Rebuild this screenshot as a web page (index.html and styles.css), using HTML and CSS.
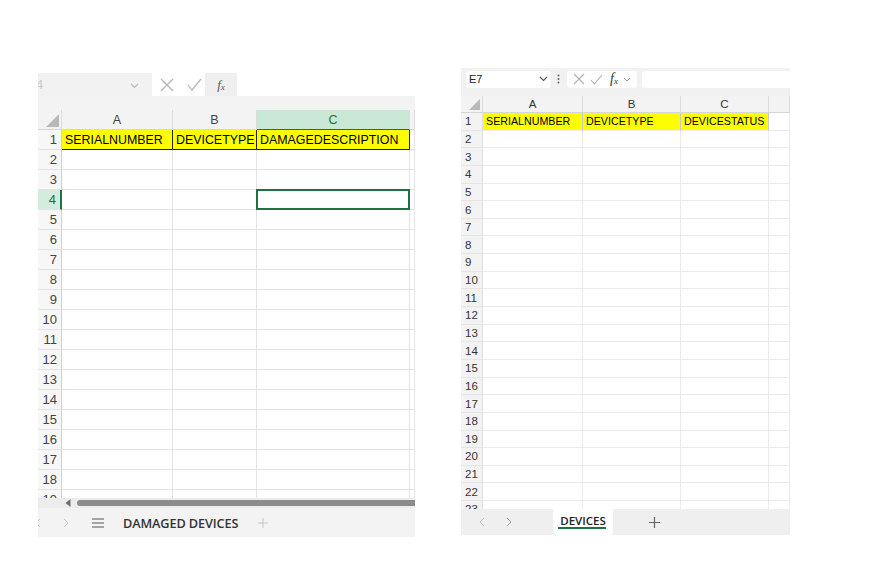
FILE: index.html
```html
<!DOCTYPE html>
<html>
<head>
<meta charset="utf-8">
<link rel="stylesheet" href="styles.css">
</head>
<body>
<div class="page">
  <section class="sheet-l">
    <div class="fbar-l">
      <div class="namebox-l"><span class="nb-text-l">4</span>
        <svg class="chev-l" width="9" height="6" viewBox="0 0 9 6"><path d="M1 1 L4.5 4.5 L8 1" fill="none" stroke="#b8b8b8" stroke-width="1.1"/></svg>
      </div>
      <div class="fbicons-l">
        <svg width="14" height="14" viewBox="0 0 14 14"><path d="M1 1 L13 13 M13 1 L1 13" stroke="#b4b4b4" stroke-width="1.2" fill="none"/></svg>
        <svg width="15" height="13" viewBox="0 0 15 13"><path d="M1 7 L5 12 L14 1" stroke="#b4b4b4" stroke-width="1.2" fill="none"/></svg>
      </div>
      <div class="fx-l"><span class="fx">f<sub>x</sub></span></div>
      <div class="finput-l"></div>
    </div>
    <div class="band-l"></div>
    <div class="grid-l">
      <div class="ch corner"><span class="tri"></span></div><div class="ch">A</div><div class="ch">B</div><div class="ch sel">C</div><div class="ch"></div>
      <div class="rh">1</div><div class="c y">SERIALNUMBER</div><div class="c y">DEVICETYPE</div><div class="c y yl">DAMAGEDESCRIPTION</div><div class="c"></div>
      <div class="rh">2</div><div class="c"></div><div class="c"></div><div class="c"></div><div class="c"></div>
      <div class="rh">3</div><div class="c"></div><div class="c"></div><div class="c"></div><div class="c"></div>
      <div class="rh rsel">4</div><div class="c"></div><div class="c"></div><div class="c active"></div><div class="c"></div>
      <div class="rh">5</div><div class="c"></div><div class="c"></div><div class="c"></div><div class="c"></div>
      <div class="rh">6</div><div class="c"></div><div class="c"></div><div class="c"></div><div class="c"></div>
      <div class="rh">7</div><div class="c"></div><div class="c"></div><div class="c"></div><div class="c"></div>
      <div class="rh">8</div><div class="c"></div><div class="c"></div><div class="c"></div><div class="c"></div>
      <div class="rh">9</div><div class="c"></div><div class="c"></div><div class="c"></div><div class="c"></div>
      <div class="rh">10</div><div class="c"></div><div class="c"></div><div class="c"></div><div class="c"></div>
      <div class="rh">11</div><div class="c"></div><div class="c"></div><div class="c"></div><div class="c"></div>
      <div class="rh">12</div><div class="c"></div><div class="c"></div><div class="c"></div><div class="c"></div>
      <div class="rh">13</div><div class="c"></div><div class="c"></div><div class="c"></div><div class="c"></div>
      <div class="rh">14</div><div class="c"></div><div class="c"></div><div class="c"></div><div class="c"></div>
      <div class="rh">15</div><div class="c"></div><div class="c"></div><div class="c"></div><div class="c"></div>
      <div class="rh">16</div><div class="c"></div><div class="c"></div><div class="c"></div><div class="c"></div>
      <div class="rh">17</div><div class="c"></div><div class="c"></div><div class="c"></div><div class="c"></div>
      <div class="rh">18</div><div class="c"></div><div class="c"></div><div class="c"></div><div class="c"></div>
      <div class="rh">19</div><div class="c"></div><div class="c"></div><div class="c"></div><div class="c"></div>
    </div>
    <div class="hscroll-l">
      <svg class="harrow" width="6" height="8" viewBox="0 0 6 8"><path d="M5.5 0 L0.5 4 L5.5 8 Z" fill="#6e6e6e"/></svg>
      <div class="thumb"></div>
    </div>
    <div class="tabs-l">
      <svg class="nav-l first" width="6" height="10" viewBox="0 0 6 10"><path d="M5 1 L1 5 L5 9" fill="none" stroke="#c4c4c4" stroke-width="1"/></svg>
      <svg class="nav-l" width="6" height="10" viewBox="0 0 6 10"><path d="M1 1 L5 5 L1 9" fill="none" stroke="#c4c4c4" stroke-width="1"/></svg>
      <svg class="menu-l" width="12" height="10" viewBox="0 0 12 10"><path d="M0 1 H12 M0 5 H12 M0 9 H12" stroke="#555" stroke-width="1.2"/></svg>
      <span class="tabname-l">DAMAGED DEVICES</span>
      <svg class="plus-l" width="10" height="10" viewBox="0 0 10 10"><path d="M5 0 V10 M0 5 H10" stroke="#c6c6c6" stroke-width="1"/></svg>
    </div>
  </section>

  <section class="sheet-r">
    <div class="fbar-r">
      <div class="namebox-r"><span class="nb-text-r">E7</span>
        <svg width="9" height="6" viewBox="0 0 9 6"><path d="M1 1 L4.5 4.5 L8 1" fill="none" stroke="#555" stroke-width="1.1"/></svg>
      </div>
      <svg class="dots-r" width="3" height="10" viewBox="0 0 3 10"><circle cx="1.5" cy="1.5" r="1" fill="#666"/><circle cx="1.5" cy="5" r="1" fill="#666"/><circle cx="1.5" cy="8.5" r="1" fill="#666"/></svg>
      <div class="fbox-r">
        <svg width="12" height="12" viewBox="0 0 12 12"><path d="M1 1 L11 11 M11 1 L1 11" stroke="#b0b0b0" stroke-width="1.1" fill="none"/></svg>
        <svg width="13" height="11" viewBox="0 0 13 11"><path d="M1 6 L4.5 10 L12 1" stroke="#b0b0b0" stroke-width="1.1" fill="none"/></svg>
        <span class="fx fx-r">f<sub>x</sub></span>
        <svg width="8" height="5" viewBox="0 0 8 5"><path d="M1 1 L4 4 L7 1" fill="none" stroke="#999" stroke-width="1"/></svg>
      </div>
      <div class="finput-r"></div>
    </div>
    <div class="band-r"></div>
    <div class="grid-r">
      <div class="ch corner"><span class="tri tri-r"></span></div><div class="ch">A</div><div class="ch">B</div><div class="ch">C</div><div class="ch"></div>
      <div class="rh">1</div><div class="c y">SERIALNUMBER</div><div class="c y">DEVICETYPE</div><div class="c y">DEVICESTATUS</div><div class="c"></div>
      <div class="rh">2</div><div class="c"></div><div class="c"></div><div class="c"></div><div class="c"></div>
      <div class="rh">3</div><div class="c"></div><div class="c"></div><div class="c"></div><div class="c"></div>
      <div class="rh">4</div><div class="c"></div><div class="c"></div><div class="c"></div><div class="c"></div>
      <div class="rh">5</div><div class="c"></div><div class="c"></div><div class="c"></div><div class="c"></div>
      <div class="rh">6</div><div class="c"></div><div class="c"></div><div class="c"></div><div class="c"></div>
      <div class="rh">7</div><div class="c"></div><div class="c"></div><div class="c"></div><div class="c"></div>
      <div class="rh">8</div><div class="c"></div><div class="c"></div><div class="c"></div><div class="c"></div>
      <div class="rh">9</div><div class="c"></div><div class="c"></div><div class="c"></div><div class="c"></div>
      <div class="rh">10</div><div class="c"></div><div class="c"></div><div class="c"></div><div class="c"></div>
      <div class="rh">11</div><div class="c"></div><div class="c"></div><div class="c"></div><div class="c"></div>
      <div class="rh">12</div><div class="c"></div><div class="c"></div><div class="c"></div><div class="c"></div>
      <div class="rh">13</div><div class="c"></div><div class="c"></div><div class="c"></div><div class="c"></div>
      <div class="rh">14</div><div class="c"></div><div class="c"></div><div class="c"></div><div class="c"></div>
      <div class="rh">15</div><div class="c"></div><div class="c"></div><div class="c"></div><div class="c"></div>
      <div class="rh">16</div><div class="c"></div><div class="c"></div><div class="c"></div><div class="c"></div>
      <div class="rh">17</div><div class="c"></div><div class="c"></div><div class="c"></div><div class="c"></div>
      <div class="rh">18</div><div class="c"></div><div class="c"></div><div class="c"></div><div class="c"></div>
      <div class="rh">19</div><div class="c"></div><div class="c"></div><div class="c"></div><div class="c"></div>
      <div class="rh">20</div><div class="c"></div><div class="c"></div><div class="c"></div><div class="c"></div>
      <div class="rh">21</div><div class="c"></div><div class="c"></div><div class="c"></div><div class="c"></div>
      <div class="rh">22</div><div class="c"></div><div class="c"></div><div class="c"></div><div class="c"></div>
      <div class="rh">23</div><div class="c"></div><div class="c"></div><div class="c"></div><div class="c"></div>
    </div>
    <div class="tabs-r">
      <svg class="nav-r" width="6" height="10" viewBox="0 0 6 10"><path d="M5 1 L1 5 L5 9" fill="none" stroke="#bdbdbd" stroke-width="1"/></svg>
      <svg class="nav-r" width="6" height="10" viewBox="0 0 6 10"><path d="M1 1 L5 5 L1 9" fill="none" stroke="#9a9a9a" stroke-width="1"/></svg>
      <div class="tab-r"><span class="tabname-r">DEVICES</span></div>
      <svg class="plus-r" width="11" height="11" viewBox="0 0 11 11"><path d="M5.5 0 V11 M0 5.5 H11" stroke="#666" stroke-width="1.2"/></svg>
    </div>
  </section>
</div>
</body>
</html>
```

FILE: styles.css
```css
* { box-sizing: border-box; }
html, body { margin: 0; padding: 0; background: #ffffff; }
body { font-family: "Liberation Sans", Arial, sans-serif; width: 870px; height: 582px; overflow: hidden; }

.page { display: flex; align-items: flex-start; padding-left: 38px; }

/* ---------- LEFT SHEET ---------- */
.sheet-l { width: 377px; margin-top: 73px; overflow: hidden; }

.fbar-l { display: flex; height: 23px; }
.namebox-l { width: 114px; background: #f2f2f2; display: flex; align-items: center; justify-content: space-between; padding-right: 13px; }
.nb-text-l { font-size: 13px; color: #c9c9c9; margin-left: -2px; }
.chev-l { margin-top: 2px; }
.fbicons-l { width: 53px; display: flex; align-items: center; gap: 13px; padding-left: 8px; background: #fff; }
.fx-l { width: 32px; background: #efefef; display: flex; align-items: center; justify-content: center; }
.fx { font-family: "Liberation Serif", "Times New Roman", serif; font-style: italic; font-size: 13px; color: #555; }
.fx sub { font-size: 9px; vertical-align: -1px; }
.finput-l { flex: 1; background: #fff; }

.band-l { height: 14px; background: #f3f3f3; }

.grid-l {
  display: grid;
  grid-template-columns: 24px 111px 84px 153px 5px;
  grid-template-rows: repeat(20, 20px);
  height: 388px;
  overflow: hidden;
}
.grid-l .ch { font-size: 12.5px; }
.grid-l .rh { font-size: 13px; padding-right: 4px; }
.grid-l .c { font-size: 12.4px; }

.ch {
  background: #f3f3f3;
  color: #444;
  display: flex; align-items: center; justify-content: center;
  border-right: 1px solid #dcdcdc;
  border-bottom: 1px solid #d6d6d6;
  position: relative;
}
.ch.sel { background: #c9e8d5; color: #1e6e42; border-bottom: 1px solid #1e7145; }
.corner { background: #f3f3f3; }
.tri {
  position: absolute; right: 2px; bottom: 2px;
  width: 0; height: 0;
  border-left: 13px solid transparent;
  border-bottom: 13px solid #b9b9b9;
}
.tri-r { border-left-width: 11px; border-bottom-width: 11px; }

.rh {
  background: #f7f7f7;
  color: #444;
  display: flex; align-items: center; justify-content: flex-end;
  border-right: 1px solid #d0d0d0;
  border-bottom: 1px solid #e4e4e4;
  position: relative;
}
.rh.rsel { background: #d3ecdd; color: #1e6e42; border-right: 2px solid #1e7145; }

.c {
  border-right: 1px solid #e4e4e4;
  border-bottom: 1px solid #e4e4e4;
  display: flex; align-items: center;
  padding-left: 2px;
  white-space: nowrap;
  overflow: hidden;
  color: #000;
  position: relative;
}
.grid-l .c.y { background: #ffff00; border-right: 1px solid #222; border-bottom: 1px solid #222; padding-left: 3px; }
.grid-l .c.yl { border-right: 1px solid #222; }
.c.active { border: 2px solid #1e7145; margin: -1px 0 0 -1px; }

.hscroll-l { height: 10px; background: #ececec; display: flex; align-items: center; padding-left: 27px; gap: 6px; }
.thumb { flex: 1; height: 6px; background: #8c8c8c; border-radius: 3px 0 0 3px; }

.tabs-l { height: 29px; background: #f3f3f3; display: flex; align-items: center; }
.nav-l.first { margin-left: -3px; }
.nav-l { margin-right: 22px; }
.menu-l { margin-left: 1px; }
.tabname-l { font-family: "Open Sans", "Noto Sans", sans-serif; font-weight: 600; font-size: 12.7px; color: #333; margin-left: 19px; letter-spacing: -0.1px; }
.plus-l { margin-left: 20px; }

/* ---------- RIGHT SHEET ---------- */
.sheet-r { width: 329px; margin-top: 68px; margin-left: 46px; overflow: hidden; }

.fbar-r { height: 22px; background: #f1f1f1; display: flex; align-items: center; padding-left: 5px; }
.namebox-r { width: 85px; height: 17px; background: #fff; border-radius: 3px; display: flex; align-items: center; justify-content: space-between; padding: 0 3px 0 3px; }
.nb-text-r { font-size: 11px; color: #222; }
.dots-r { margin-left: 6px; }
.fbox-r { margin-left: 7px; width: 70px; height: 17px; background: #fff; border-radius: 3px; display: flex; align-items: center; padding-left: 6px; gap: 5px; }
.fx-r { font-size: 14px; color: #333; margin-left: 2px; }
.finput-r { margin-left: 5px; flex: 1; height: 17px; background: #fff; border-radius: 3px 0 0 3px; }

.band-r { height: 6px; background: #f1f1f1; }

.grid-r {
  display: grid;
  grid-template-columns: 22px 100px 98px 88px 21px;
  grid-template-rows: 17px repeat(23, 17.65px);
  height: 413px;
  overflow: hidden;
}
.grid-r .ch { font-size: 11.5px; background: #f3f3f3; color: #333; }
.grid-r .rh { font-size: 11.5px; background: #f3f3f3; justify-content: flex-start; padding-left: 4px; color: #333; border-right: 1px solid #dedede; }
.grid-r .c { font-size: 10.7px; border-right: 1px solid #ebebeb; border-bottom: 1px solid #ebebeb; padding-left: 3px; }
.grid-r .c.y { background: #ffff00; border-right: 1px solid #c8c8c8; }

.tabs-r { height: 26px; background: #efefef; display: flex; align-items: center; padding-left: 18px; }
.nav-r { margin-right: 21px; }
.tab-r { margin-left: 20px; width: 60px; height: 26px; background: #fff; border-radius: 0 0 4px 4px; display: flex; align-items: center; justify-content: center; position: relative; }
.tab-r::after { content: ""; position: absolute; left: 5px; right: 7px; bottom: 6px; height: 2px; background: #1e7145; }
.tabname-r { font-family: "Open Sans", "Noto Sans", sans-serif; font-weight: 600; font-size: 11.5px; color: #222; margin-top: -3px; }
.plus-r { margin-left: 36px; }
```
